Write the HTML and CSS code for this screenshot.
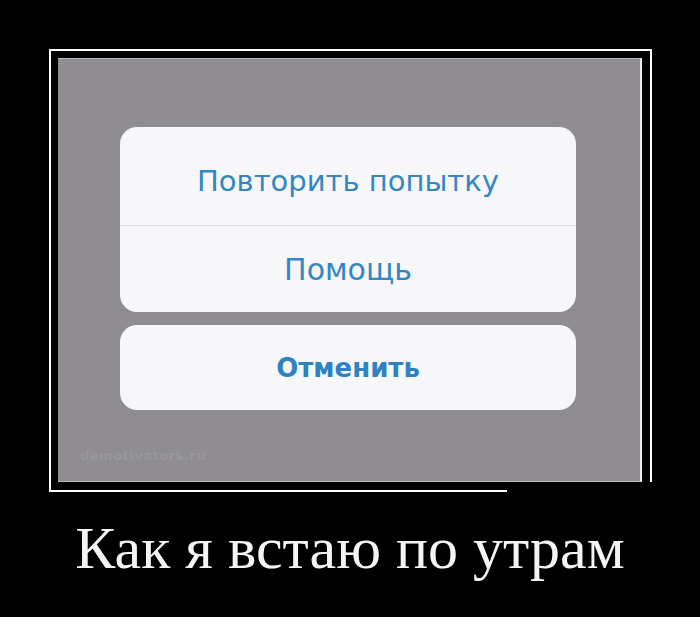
FILE: index.html
```html
<!doctype html>
<html>
<head>
	<meta charset="utf-8">
	<title>Как я встаю по утрам</title>
	<link rel="stylesheet" href="styles.css">
</head>
<body>
<div class="poster">
	<div class="frame">
		<div class="shot">
			<div class="sheet">
				<div class="group">
					<div class="btn btn-first">Повторить попытку</div>
					<div class="btn btn-second">Помощь</div>
				</div>
				<div class="group">
					<div class="btn btn-cancel">Отменить</div>
				</div>
			</div>
			<div class="mark">demotivators.ru</div>
		</div>
	</div>
	<div class="caption">Как я встаю по утрам</div>
</div>
</body>
</html>
```

FILE: styles.css
```css
html,body{margin:0;padding:0;background:#000;}
.poster{width:700px;height:617px;display:flex;flex-direction:column;}
.frame{position:relative;width:584px;height:424px;margin:49px 0 0 49px;padding:7px 8px 8px 7px;border:2px solid #fff;}
/* нижний правый угол рамки обрезан */
.frame:after{content:"";position:absolute;right:-3px;bottom:-3px;width:146px;height:11px;background:#000;}
.shot{width:582px;height:422px;background:#8f8d92;border-top:1px solid #b9b8bc;border-bottom:1px solid #b9b8bc;border-right:2px solid #ececee;display:flex;flex-direction:column;}
.sheet{width:456px;margin:68px 0 0 62px;display:flex;flex-direction:column;gap:13px;}
.group{background:#f7f7f9;border-radius:17px;overflow:hidden;}
.btn{display:flex;align-items:center;justify-content:center;font-family:"DejaVu Sans","Liberation Sans",sans-serif;color:#3287c2;font-size:29px;}
.btn-first{height:99px;border-bottom:1px solid #d9d9dd;padding-top:10px;box-sizing:border-box;}
.btn-second{height:86px;font-size:30px;}
.btn-cancel{height:85px;font-weight:bold;font-size:26px;color:#2f82c0;}
.mark{margin:38px 0 0 22px;font-family:"DejaVu Sans",sans-serif;font-weight:bold;font-size:13px;color:#99979c;letter-spacing:0.5px;}
.caption{margin-top:22px;text-align:center;font-family:"Liberation Serif","Times New Roman",serif;font-size:60px;color:#f4f4f4;}
```
